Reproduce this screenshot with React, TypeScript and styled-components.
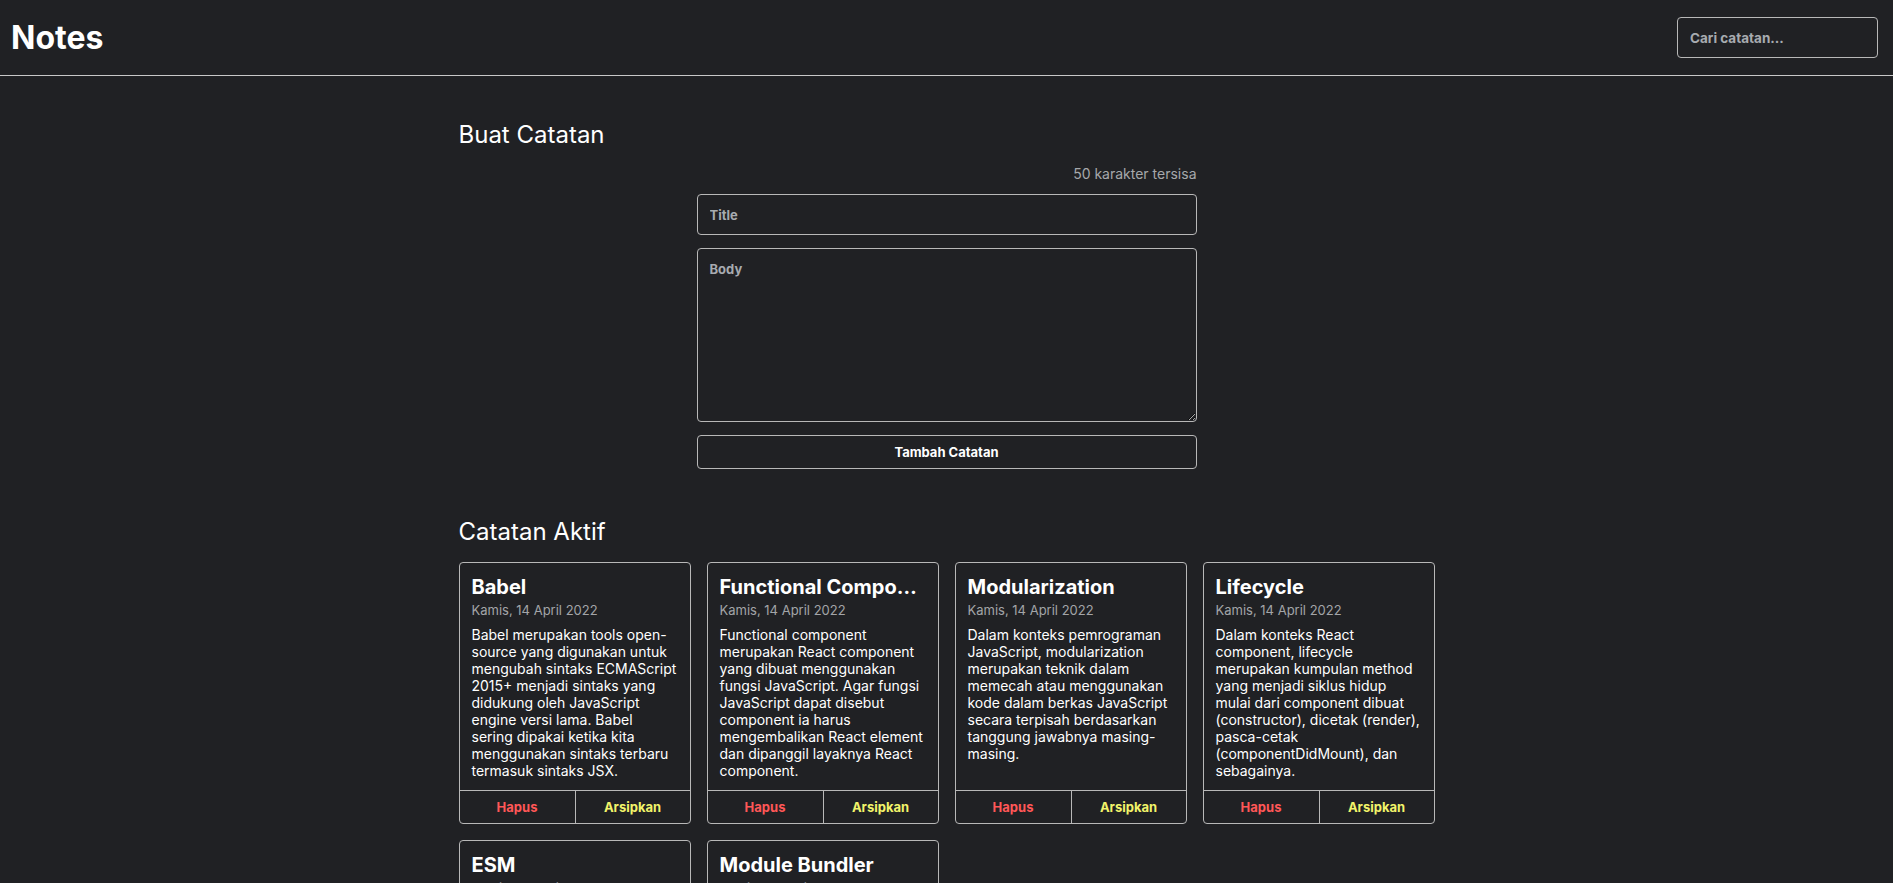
import React, { useState } from "react";
import styled, { createGlobalStyle } from "styled-components";

const GlobalStyle = createGlobalStyle`
  * {
    box-sizing: border-box;
  }
  body {
    margin: 0;
    background-color: #202124;
    color: #ffffff;
    font-family: Inter, "Noto Sans", sans-serif;
  }
`;

interface note {
  id: number;
  title: string;
  body: string;
  createdAt: string;
}

const initialNotes: note[] = [
  {
    id: 1,
    title: "Babel",
    body: "Babel merupakan tools open-source yang digunakan untuk mengubah sintaks ECMAScript 2015+ menjadi sintaks yang didukung oleh JavaScript engine versi lama. Babel sering dipakai ketika kita menggunakan sintaks terbaru termasuk sintaks JSX.",
    createdAt: "Kamis, 14 April 2022",
  },
  {
    id: 2,
    title: "Functional Component",
    body: "Functional component merupakan React component yang dibuat menggunakan fungsi JavaScript. Agar fungsi JavaScript dapat disebut component ia harus mengembalikan React element dan dipanggil layaknya React component.",
    createdAt: "Kamis, 14 April 2022",
  },
  {
    id: 3,
    title: "Modularization",
    body: "Dalam konteks pemrograman JavaScript, modularization merupakan teknik dalam memecah atau menggunakan kode dalam berkas JavaScript secara terpisah berdasarkan tanggung jawabnya masing-masing.",
    createdAt: "Kamis, 14 April 2022",
  },
  {
    id: 4,
    title: "Lifecycle",
    body: "Dalam konteks React component, lifecycle merupakan kumpulan method yang menjadi siklus hidup mulai dari component dibuat (constructor), dicetak (render), pasca-cetak (componentDidMount), dan sebagainya.",
    createdAt: "Kamis, 14 April 2022",
  },
  {
    id: 5,
    title: "ESM",
    body: "ESM (ECMAScript Module) merupakan format modularisasi standar JavaScript.",
    createdAt: "Kamis, 14 April 2022",
  },
  {
    id: 6,
    title: "Module Bundler",
    body: "Dalam konteks pemrograman JavaScript, module bundler merupakan tools yang digunakan untuk menggabungkan seluruh modul JavaScript yang digunakan oleh aplikasi menjadi satu berkas.",
    createdAt: "Kamis, 14 April 2022",
  },
];

const Header = styled.header`
  height: 76px;
  display: flex;
  align-items: center;
  justify-content: space-between;
  padding: 0 15px 0 11px;
  border-bottom: 1px solid #c8c8c8;
`;

const Logo = styled.h1`
  margin: 0;
  font-size: 32px;
  font-weight: 700;
`;

const SearchInput = styled.input`
  width: 201px;
  height: 41px;
  padding: 0 12px;
  background: transparent;
  border: 1px solid #b8b8b8;
  border-radius: 4px;
  color: #ffffff;
  font-family: inherit;
  font-size: 13.5px;
  font-weight: 700;
  outline: none;

  &::placeholder {
    color: #a7abb0;
  }
`;

const Main = styled.main`
  width: 976px;
  margin: 0 auto;
  padding-top: 44px;
`;

const SectionTitle = styled.h2`
  margin: 0;
  font-size: 24px;
  font-weight: 400;
  line-height: normal;
`;

const NoteForm = styled.form`
  width: 500px;
  margin: 16px auto 0;
  display: flex;
  flex-direction: column;
  gap: 13px;
`;

const Counter = styled.p`
  margin: 0 0 -1px;
  text-align: right;
  font-size: 14px;
  color: #a6a8ab;
`;

const fieldStyle = `
  width: 100%;
  padding: 12px;
  background: transparent;
  border: 1px solid #b8b8b8;
  border-radius: 4px;
  color: #ffffff;
  font-family: Inter, "Noto Sans", sans-serif;
  font-size: 13px;
  font-weight: 700;
  outline: none;

  &::placeholder {
    color: #a7abb0;
  }
`;

const TitleInput = styled.input`
  ${fieldStyle}
  height: 41px;
`;

const BodyInput = styled.textarea`
  ${fieldStyle}
  height: 174px;
  resize: vertical;
`;

const SubmitButton = styled.button`
  height: 34px;
  background: transparent;
  border: 1px solid #b8b8b8;
  border-radius: 4px;
  color: #ffffff;
  font-family: inherit;
  font-size: 13px;
  font-weight: 700;
  cursor: pointer;
`;

const ListSection = styled.section`
  margin-top: 48px;
`;

const Grid = styled.div`
  margin-top: 16px;
  display: grid;
  grid-template-columns: repeat(4, 232px);
  gap: 16px;
`;

const Card = styled.article`
  display: flex;
  flex-direction: column;
  border: 1px solid #b8b8b8;
  border-radius: 4px;
`;

const CardContent = styled.div`
  flex: 1;
  padding: 12px 12px 11px;
`;

const CardTitle = styled.h3`
  margin: 0;
  font-size: 20px;
  font-weight: 700;
  line-height: normal;
  white-space: nowrap;
  overflow: hidden;
  text-overflow: ellipsis;
`;

const CardDate = styled.p`
  margin: 3px 0 0;
  font-size: 13px;
  color: #a3a5a8;
`;

const CardBody = styled.p`
  margin: 8px 0 0;
  font-size: 14px;
  line-height: normal;
`;

const CardActions = styled.div`
  display: grid;
  grid-template-columns: 1fr 1fr;
  border-top: 1px solid #b8b8b8;
`;

const ActionButton = styled.button<{ $color: string }>`
  height: 32px;
  background: transparent;
  border: none;
  color: ${(p) => p.$color};
  font-family: inherit;
  font-size: 13px;
  font-weight: 700;
  cursor: pointer;

  & + & {
    border-left: 1px solid #b8b8b8;
  }
`;

const App: React.FC = (): JSX.Element => {
  const [notes, setNotes] = useState<note[]>(initialNotes);
  const [title, setTitle] = useState<string>("");
  const [body, setBody] = useState<string>("");
  const [query, setQuery] = useState<string>("");

  const handleSubmit = (event: React.FormEvent<HTMLFormElement>) => {
    event.preventDefault();
    if (!title) return;
    setNotes((prev) => [
      ...prev,
      { id: Date.now(), title, body, createdAt: "Kamis, 14 April 2022" },
    ]);
    setTitle("");
    setBody("");
  };

  const removeNote = (id: number) => {
    setNotes((prev) => prev.filter((x) => x.id !== id));
  };

  const shown = notes.filter((x) =>
    x.title.toLowerCase().includes(query.toLowerCase())
  );

  return (
    <>
      <GlobalStyle />
      <Header>
        <Logo>Notes</Logo>
        <SearchInput
          placeholder="Cari catatan..."
          value={query}
          onChange={(e) => setQuery(e.target.value)}
        />
      </Header>
      <Main>
        <SectionTitle>Buat Catatan</SectionTitle>
        <NoteForm onSubmit={handleSubmit}>
          <Counter>{50 - title.length} karakter tersisa</Counter>
          <TitleInput
            placeholder="Title"
            value={title}
            onChange={(e) => setTitle(e.target.value.slice(0, 50))}
          />
          <BodyInput
            placeholder="Body"
            value={body}
            onChange={(e) => setBody(e.target.value)}
          />
          <SubmitButton type="submit">Tambah Catatan</SubmitButton>
        </NoteForm>
        <ListSection>
          <SectionTitle>Catatan Aktif</SectionTitle>
          <Grid>
            {shown.map((x) => (
              <Card key={x.id}>
                <CardContent>
                  <CardTitle>{x.title}</CardTitle>
                  <CardDate>{x.createdAt}</CardDate>
                  <CardBody>{x.body}</CardBody>
                </CardContent>
                <CardActions>
                  <ActionButton $color="#ff5757" onClick={() => removeNote(x.id)}>
                    Hapus
                  </ActionButton>
                  <ActionButton $color="#f2f46a">Arsipkan</ActionButton>
                </CardActions>
              </Card>
            ))}
          </Grid>
        </ListSection>
      </Main>
    </>
  );
};

export default App;
